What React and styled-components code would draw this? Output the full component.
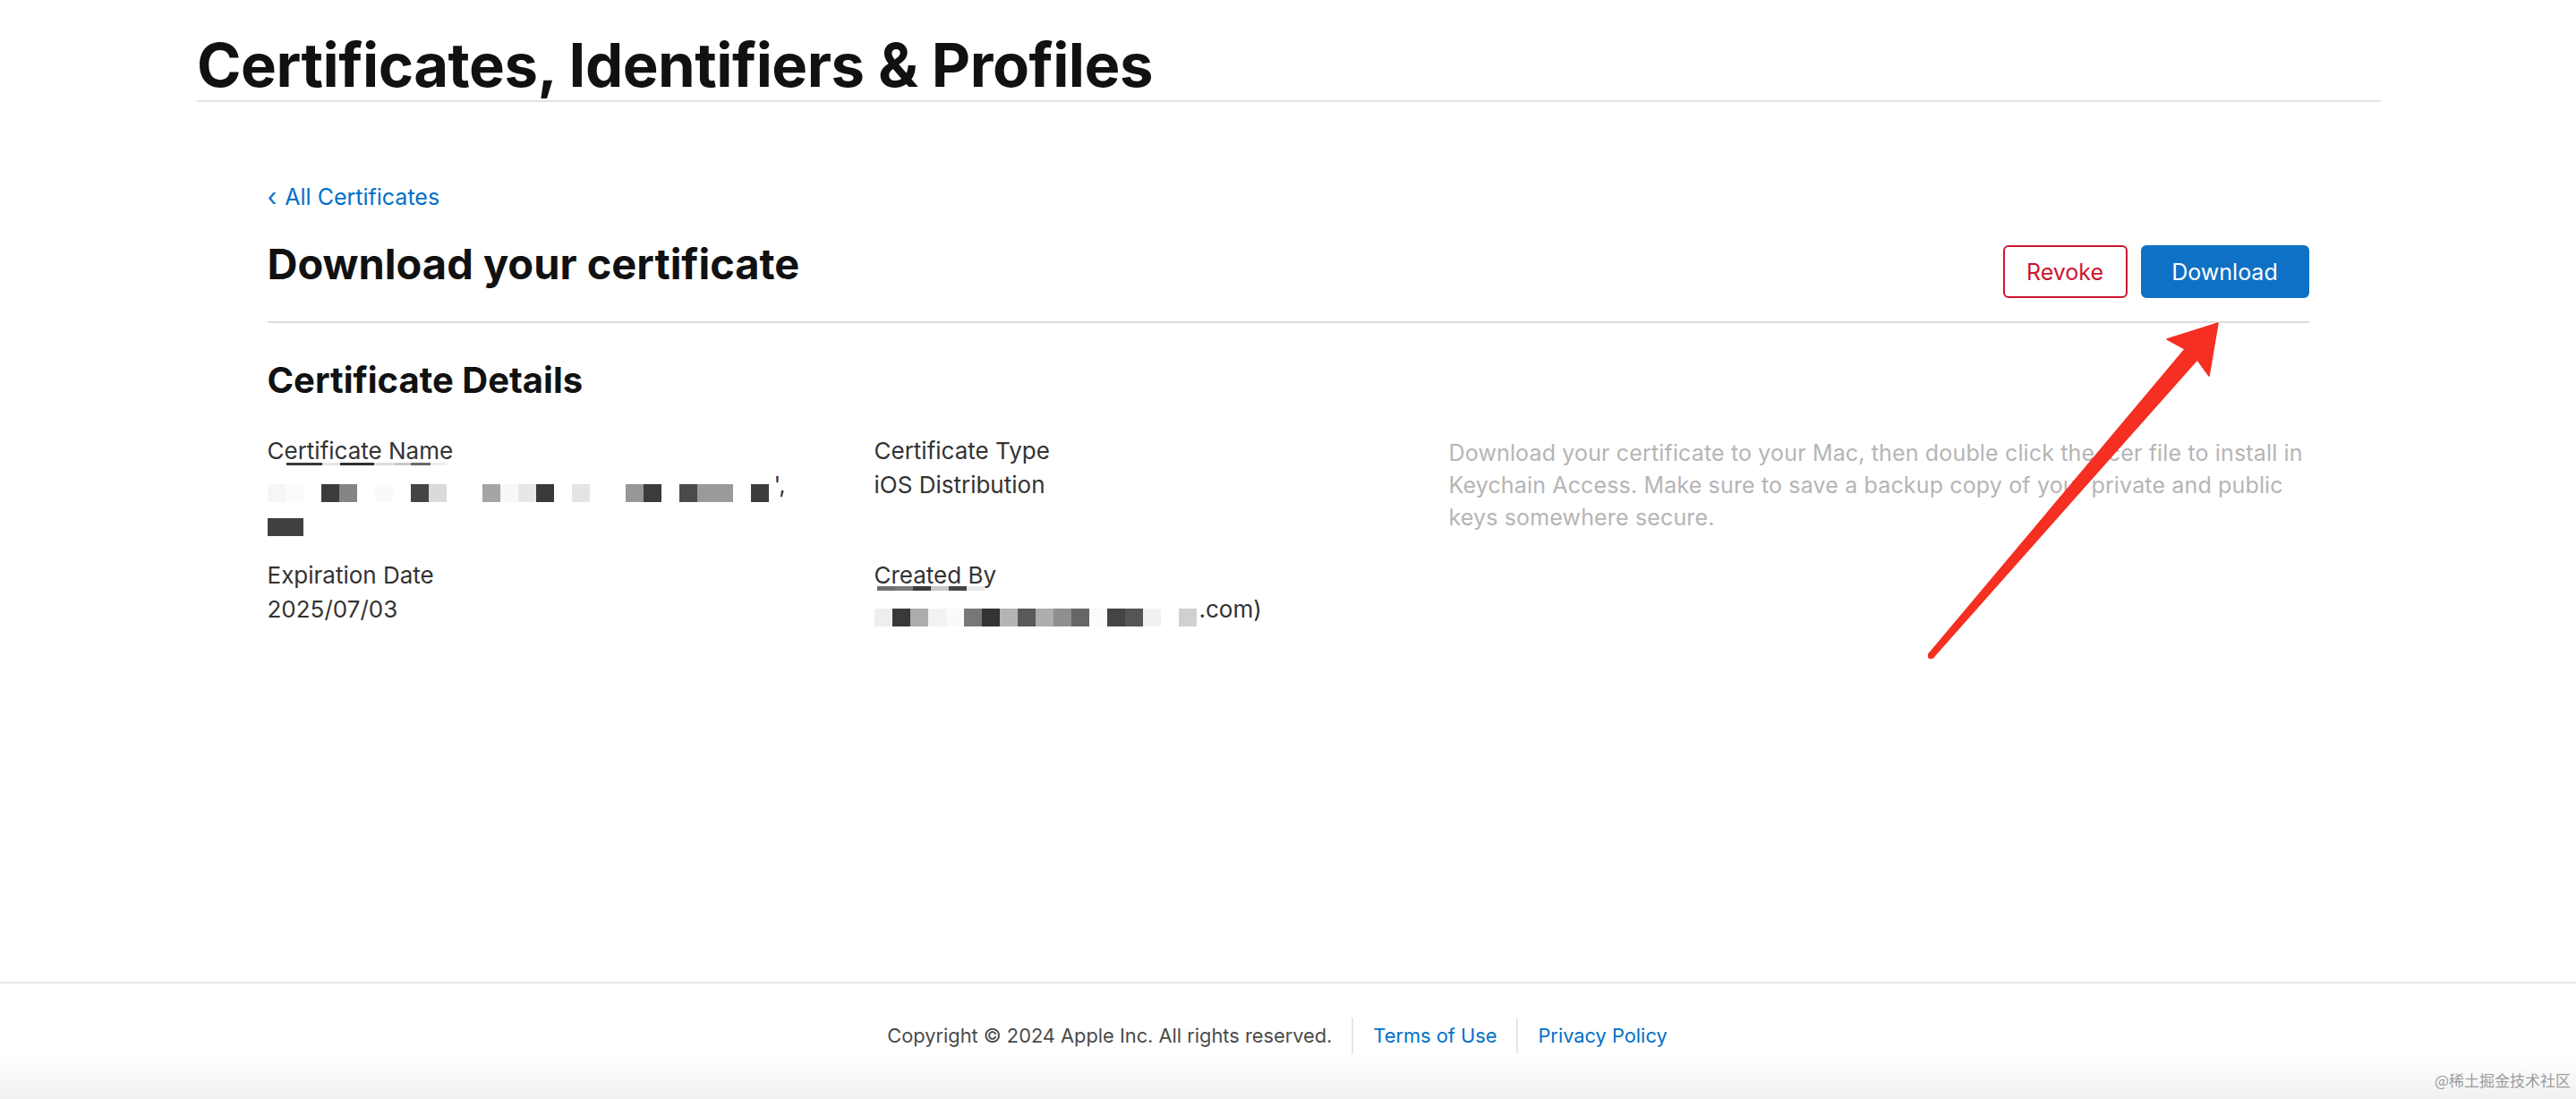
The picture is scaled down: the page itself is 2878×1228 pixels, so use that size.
import React from "react";
import styled, { createGlobalStyle, css } from "styled-components";

const GlobalStyle = createGlobalStyle`
  html, body { margin: 0; padding: 0; background: #fff; }
  body {
    font-family: Inter, "Noto Sans", "Liberation Sans", sans-serif;
    color: #1d1d1f;
    -webkit-font-smoothing: antialiased;
  }
  * { box-sizing: border-box; }
`;

const Page = styled.div`
  position: relative;
  min-height: 1228px;
  display: flex;
  flex-direction: column;
  overflow: hidden;
`;

const TopHeader = styled.header`
  margin: 0 218px 0 220px;
  padding-top: 40px;
  padding-bottom: 6px;
  border-bottom: 2px solid #e2e2e2;
`;

const SiteTitle = styled.h1`
  margin: 0;
  font-size: 67px;
  line-height: 66px;
  font-weight: 700;
  letter-spacing: -0.5px;
  color: #111;
`;

const Main = styled.main`
  width: 2281px;
  margin: 0 auto;
  padding-top: 87px;
`;

const BackLink = styled.a`
  display: inline-flex;
  align-items: center;
  gap: 9px;
  font-size: 25px;
  line-height: 38px;
  color: #0070c9;
  text-decoration: none;
`;

const Chevron = styled.span`
  font-size: 28px;
  line-height: 38px;
`;

const HeaderRow = styled.div`
  display: flex;
  justify-content: space-between;
  align-items: flex-start;
  margin-top: 28px;
  padding-bottom: 26px;
  border-bottom: 2px solid #dcdcdc;
`;

const PageTitle = styled.h2`
  margin: 0;
  font-size: 47px;
  line-height: 56px;
  font-weight: 700;
  color: #111;
`;

const Actions = styled.div`
  display: flex;
  gap: 15px;
  margin-top: 7px;
`;

const Button = styled.button`
  height: 59px;
  width: ${(p) => p.$width}px;
  border-radius: 6px;
  font-family: inherit;
  font-size: 25px;
  cursor: pointer;
  ${(p) =>
    p.$variant === "danger"
      ? css`
          background: #fff;
          color: #cc1530;
          border: 2px solid #cc1530;
        `
      : css`
          background: #0f71c5;
          color: #fff;
          border: 2px solid #0f71c5;
        `}
`;

const SectionTitle = styled.h3`
  margin: 40px 0 0;
  font-size: 40px;
  line-height: 47px;
  font-weight: 700;
  color: #111;
`;

const DetailsGrid = styled.div`
  display: grid;
  grid-template-columns: 678px 642px 1fr;
  row-gap: 25px;
  margin-top: 37px;
`;

const Field = styled.div`
  position: relative;
`;

const Label = styled.div`
  font-size: 26px;
  line-height: 38px;
  color: #333;
`;

const Value = styled.div`
  font-size: 26px;
  line-height: 38px;
  color: #333;
`;

const Description = styled.p`
  grid-column: 3;
  grid-row: 1 / span 2;
  margin: 3px 0 0;
  font-size: 25px;
  line-height: 36px;
  letter-spacing: 0.15px;
  color: #b5b5b5;
`;

const MosaicLine = styled.div`
  display: flex;
  align-items: flex-end;
  height: 38px;
`;

const Cell = styled.span`
  flex: none;
  width: 20px;
  height: 20px;
  background: ${(p) => p.$c || "transparent"};
`;

const TailText = styled.span`
  align-self: flex-start;
  font-size: 26px;
  line-height: 38px;
  color: #333;
  margin-left: ${(p) => p.$gap || 0}px;
`;

const Smudge = styled.div`
  position: absolute;
  left: ${(p) => p.$left}px;
  top: ${(p) => p.$top}px;
  display: flex;
  height: ${(p) => p.$h}px;
`;

const SmudgeSeg = styled.span`
  flex: none;
  height: 100%;
`;

const Footer = styled.footer`
  margin-top: auto;
  border-top: 2px solid #e6e6e6;
  padding: 38px 24px 51px 0;
  display: flex;
  justify-content: center;
  align-items: center;
  gap: 22px;
  background: linear-gradient(to bottom, #fff 0%, #fff 62%, #f1f1f1 100%);
`;

const FooterText = styled.span`
  font-size: 21.8px;
  line-height: 40px;
  color: #4a4a4a;
`;

const FooterLink = styled.a`
  font-size: 21.8px;
  line-height: 40px;
  color: #0070c9;
  text-decoration: none;
`;

const Divider = styled.span`
  width: 2px;
  height: 40px;
  background: #e6e6e6;
`;

const Watermark = styled.div`
  position: absolute;
  right: 6px;
  bottom: 9px;
  font-family: "Noto Sans CJK SC", sans-serif;
  font-size: 17px;
  color: #9c9c9c;
`;

const ArrowOverlay = styled.svg`
  position: absolute;
  left: 2150px;
  top: 355px;
  pointer-events: none;
`;

const nameRow1 = [
  "#f6f6f6", "#fbfbfb", null, "#3b3b3b", "#858585", null, "#fafafa", null,
  "#454545", "#dadada", null, null, "#a5a5a5", "#f8f8f8", "#e7e7e7", "#3a3a3a",
  null, "#e4e4e4", null, null, "#979797", "#3b3b3b", null, "#4a4a4a",
  "#9a9a9a", "#9a9a9a", null, "#3d3d3d",
];
const nameRow2 = ["#404040", "#404040"];
const emailRow = [
  "#eeeeee", "#393939", "#acacac", "#f2f2f2", "#fafafa", "#777777", "#333333",
  "#b4b4b4", "#5a5a5a", "#adadad", "#8f8f8f", "#666666", "#fbfbfb", "#444444",
  "#555555", "#f1f1f1", null, "#d0d0d0",
];
const nameSmudge = [
  [40, "#3a3a3a"], [20, "#e6e6e6"], [38, "#2f2f2f"], [23, "#dddddd"],
  [18, "#c8c8c8"], [22, "#6a6a6a"], [18, "#eeeeee"],
];
const createdSmudge = [
  [20, "#6e6e6e"], [20, "#7a7a7a"], [20, "#3a3a3a"], [20, "#c8c8c8"],
  [20, "#444444"], [20, "#e8e8e8"],
];

const Mosaic = ({ cells, tail, gap }) => (
  <MosaicLine>
    {cells.map((c, i) => (
      <Cell key={i} $c={c} />
    ))}
    {tail && <TailText $gap={gap}>{tail}</TailText>}
  </MosaicLine>
);

const SmudgeBar = ({ segs, left, top, h }) => (
  <Smudge $left={left} $top={top} $h={h}>
    {segs.map(([w, c], i) => (
      <SmudgeSeg key={i} style={{ width: w, background: c }} />
    ))}
  </Smudge>
);

export default function App() {
  return (
    <>
      <GlobalStyle />
      <Page>
        <TopHeader>
          <SiteTitle>Certificates, Identifiers &amp; Profiles</SiteTitle>
        </TopHeader>

        <Main>
          <BackLink href="#">
            <Chevron>‹</Chevron>
            All Certificates
          </BackLink>

          <HeaderRow>
            <PageTitle>Download your certificate</PageTitle>
            <Actions>
              <Button $variant="danger" $width={139}>Revoke</Button>
              <Button $variant="primary" $width={188}>Download</Button>
            </Actions>
          </HeaderRow>

          <SectionTitle>Certificate Details</SectionTitle>

          <DetailsGrid>
            <Field>
              <Label>Certificate Name</Label>
              <SmudgeBar segs={nameSmudge} left={21} top={32} h={3} />
              <Mosaic cells={nameRow1} tail="'," gap={6} />
              <Mosaic cells={nameRow2} />
            </Field>
            <Field>
              <Label>Certificate Type</Label>
              <Value>iOS Distribution</Value>
            </Field>
            <Description>
              Download your certificate to your Mac, then double click the .cer
              file to install in Keychain Access. Make sure to save a backup copy
              of your private and public keys somewhere secure.
            </Description>
            <Field>
              <Label>Expiration Date</Label>
              <Value>2025/07/03</Value>
            </Field>
            <Field>
              <Label>Created By</Label>
              <SmudgeBar segs={createdSmudge} left={3} top={31} h={5} />
              <Mosaic cells={emailRow} tail=".com)" gap={3} />
            </Field>
          </DetailsGrid>
        </Main>

        <Footer>
          <FooterText>Copyright © 2024 Apple Inc. All rights reserved.</FooterText>
          <Divider />
          <FooterLink href="#">Terms of Use</FooterLink>
          <Divider />
          <FooterLink href="#">Privacy Policy</FooterLink>
        </Footer>

        <ArrowOverlay width="340" height="390" viewBox="0 0 340 390">
          <polygon
            points="4.7,376 291.2,35.1 271,24 328,6 318,65 304.8,46.9 9.3,380"
            fill="#f52f22"
            stroke="#f52f22"
            strokeWidth="1.5"
            strokeLinejoin="round"
          />
          <circle cx="7" cy="378" r="3.2" fill="#f52f22" />
        </ArrowOverlay>

        <Watermark>@稀土掘金技术社区</Watermark>
      </Page>
    </>
  );
}
